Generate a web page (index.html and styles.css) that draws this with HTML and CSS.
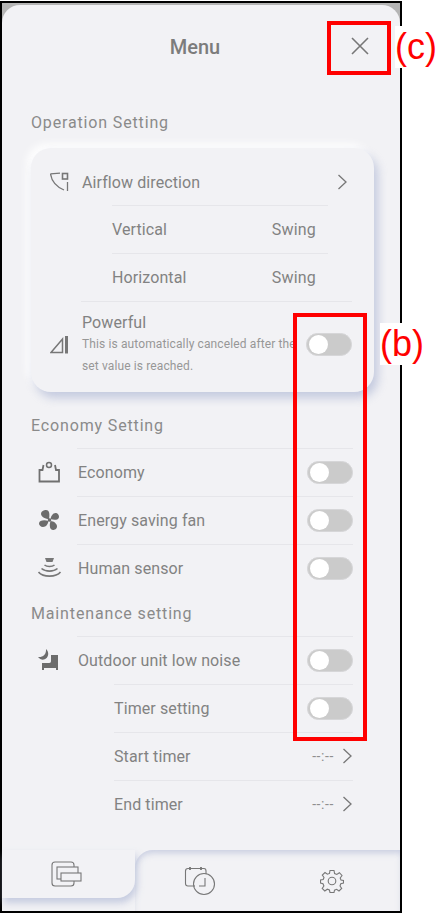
FILE: index.html
```html
<!DOCTYPE html>
<html lang="en">
<head>
    <meta charset="UTF-8">
    <meta name="viewport" content="width=device-width, initial-scale=1.0">
    <title>Menu</title>
    <link rel="stylesheet" href="styles.css">
</head>
<body>
    <div class="frame">
        <div class="panel">
            <div class="header">
                <div class="header-title">Menu</div>
                <svg class="close" width="20" height="20" viewBox="0 0 20 20"><path d="M2 2L18 18M18 2L2 18" fill="none" stroke="#777" stroke-width="1.6"/></svg>
            </div>

            <div class="section-title first">Operation Setting</div>
            <div class="card">
                <div class="row line-sub">
                    <svg class="icon-card" width="20" height="20" viewBox="0 0 20 20" fill="none" stroke="#777" stroke-width="1.3"><path d="M.5 1.800L10 1.200M.5 1.800C1.500 9 7 15 14 18"/><rect x="12.500" y="1.500" width="5" height="5.500" stroke-width="1.600"/><path d="M17.500 10V19"/></svg>
                    <span class="label">Airflow direction</span>
                    <svg class="chevron airflow-chevron" width="11" height="16" viewBox="0 0 11 16"><path d="M1.500 1L9 8L1.500 15" fill="none" stroke="#777" stroke-width="1.3"/></svg>
                </div>
                <div class="row sub line-sub">
                    <span class="label">Vertical</span>
                    <span class="value">Swing</span>
                </div>
                <div class="row sub line-wide">
                    <span class="label">Horizontal</span>
                    <span class="value">Swing</span>
                </div>
                <div class="row-powerful">
                    <svg class="icon-card" width="20" height="18" viewBox="0 0 20 18"><path d="M1 16.500L12.500 3V16.500Z" fill="none" stroke="#777" stroke-width="1.5"/><rect x="15" y="0" width="3" height="17.500" fill="#777"/></svg>
                    <div class="powerful-text">
                        <div class="label powerful-name">Powerful</div>
                        <div class="note">This is automatically canceled after the set value is reached.</div>
                    </div>
                    <div class="toggle toggle-powerful"></div>
                </div>
            </div>

            <div class="section-title">Economy Setting</div>
            <div class="list">
                <div class="item line-top">
                    <svg class="icon" width="24" height="22" viewBox="0 0 24 22" fill="none" stroke="#707070" stroke-width="1.800"><path d="M5.500 4L4.500 9H1.500V20.500H21V9H18L17 4"/><circle cx="11" cy="4" r="2.500" stroke-width="1.500"/></svg>
                    <span class="label">Economy</span>
                    <div class="toggle"></div>
                </div>
                <div class="item line-top">
                    <svg class="icon" width="24" height="22" viewBox="0 0 24 22" fill="#6c6c6c"><circle cx="11.500" cy="11" r="1.800"/><path d="M11 10C8 10 3 8 3 5C3 2 6 1 8 1C11 1 12 4 11 10Z"/><path d="M12.500 10C13 7 15 4 17.500 4C20 4 21 6.500 21 8C21 11 16 11.500 12.500 10Z"/><path d="M12.500 12C16 12 19 15 19 17.500C19 20 16.500 21 15 21C12 21 11 17 12.500 12Z"/><path d="M10.500 12C10 15 8 18 5 18C2.500 18 1 16 1 14.500C1 11.500 6 10.500 10.500 12Z"/></svg>
                    <span class="label">Energy saving fan</span>
                    <div class="toggle"></div>
                </div>
                <div class="item line-top">
                    <svg class="icon" width="24" height="22" viewBox="0 0 24 22" fill="none" stroke="#777" stroke-width="1.600"><path d="M7 1H16L14.500 5H8.500Z" fill="#777" stroke="none"/><path d="M6.500 8C9 10 14 10 16.500 8M3.500 11.500C7.500 15 15.500 15 19.500 11.500M.5 15C5 20.500 18 20.500 22.500 15"/></svg>
                    <span class="label">Human sensor</span>
                    <div class="toggle"></div>
                </div>
            </div>

            <div class="section-title section-full">Maintenance setting</div>
            <div class="list">
                <div class="item line-top">
                    <svg class="icon" width="24" height="22" viewBox="0 0 24 22" fill="#6c6c6c"><path d="M8 0C11.500 3 11 9 6 10.500C4 11 1.500 10 0 8C4.500 8.500 8.500 6 8 0Z"/><path d="M13 6H20V21H18V19H6V21H4V14H11C13 14 13 13 13 11Z"/></svg>
                    <span class="label">Outdoor unit low noise</span>
                    <div class="toggle"></div>
                </div>
                <div class="item sub line-top">
                    <span class="label">Timer setting</span>
                    <div class="toggle"></div>
                </div>
                <div class="item sub line-top">
                    <span class="label">Start timer</span>
                    <span class="time">--:--</span>
                    <svg class="chevron" width="11" height="16" viewBox="0 0 11 16"><path d="M1.500 1L9 8L1.500 15" fill="none" stroke="#777" stroke-width="1.3"/></svg>
                </div>
                <div class="item sub line-top">
                    <span class="label">End timer</span>
                    <span class="time">--:--</span>
                    <svg class="chevron" width="11" height="16" viewBox="0 0 11 16"><path d="M1.500 1L9 8L1.500 15" fill="none" stroke="#777" stroke-width="1.3"/></svg>
                </div>
            </div>

            <div class="nav">
                <div class="tab tab-active">
                    <svg width="32" height="26" viewBox="0 0 32 26" fill="none" stroke="#777" stroke-width="1.100"><rect x="1" y="1" width="22" height="24" rx="3"/><rect x="6" y="6" width="21" height="12" fill="#f2f2f5"/><rect x="10" y="12" width="20" height="8" fill="#f2f2f5"/></svg>
                </div>
                <div class="tab-rest">
                    <div class="tab tab-clock">
                        <svg width="32" height="30" viewBox="0 0 32 30" fill="none" stroke="#777" stroke-width="1.100"><path d="M11 20H4C2.500 20 1.500 19 1.500 17.500V5C1.500 3.500 2.500 2.500 4 2.500H20C21.500 2.500 22 3.500 22 5V8"/><path d="M6 1V4M17 1V4" stroke-width="1.800"/><circle cx="20" cy="18" r="10.500"/><path d="M21 12V20H15"/></svg>
                    </div>
                    <div class="tab tab-gear">
                        <svg width="24" height="24" viewBox="0 0 24 24" fill="none" stroke="#777" stroke-width="1.100"><circle cx="12" cy="12" r="3.800"/><path d="M10 1.500H14L14.600 4.500L16.800 5.400L19.400 3.700L22 6.500L20.200 9L21 11L23.500 11.500V14L20.800 14.800L20 17L21.700 19.500L19 22L16.600 20.300L14.500 21.200L14 23.500H10L9.400 21L7.300 20.200L4.800 22L2.200 19.500L3.900 17L3 14.800L.5 14V11L3.200 10.500L4 8.500L2.300 6.100L5 3.500L7.400 5.200L9.500 4.400Z"/></svg>
                    </div>
                </div>
            </div>
        </div>
    </div>

    <div class="mark mark-c"></div>
    <div class="mark-label label-c">(c)</div>
    <div class="mark mark-b"></div>
    <div class="mark-label label-b">(b)</div>
</body>
</html>
```

FILE: styles.css
```css
* {
    box-sizing: border-box;
}

body {
    margin: 0;
    background-color: #fff;
    font-family: 'Roboto', 'Liberation Sans', sans-serif;
    color: #828282;
}

.frame {
    width: 402px;
    height: 912px;
    margin-top: 1px;
    border: 2px solid #000;
    background-color: #b5b5b5;
    padding-top: 2px;
}

.panel {
    height: 906px;
    background-color: #f2f2f5;
    border-radius: 18px 18px 0 0;
}

.header {
    height: 83px;
    padding-right: 12px;
    display: flex;
    align-items: center;
    justify-content: center;
    position: relative;
}

.header-title {
    font-size: 20px;
    font-weight: 500;
    color: #7c7c7c;
}

.close {
    position: absolute;
    right: 30px;
    top: 31px;
}

.section-title {
    height: 24px;
    margin: 0 0 10px 29px;
    font-size: 16px;
    line-height: 24px;
    letter-spacing: 0.85px;
    color: #8a8a8a;
}

.section-title.first {
    margin-top: 23px;
    margin-bottom: 13px;
}

.section-full {
    margin-top: 10px;
}

.card {
    width: 343px;
    height: 244px;
    margin: 0 0 22px 29px;
    padding: 10px 22px 0 19px;
    border-radius: 20px;
    background-color: #f2f2f5;
    box-shadow: 4px 6px 10px rgba(180, 188, 215, 0.75), -4px -4px 8px #fff;
}

.row {
    height: 48px;
    display: flex;
    align-items: center;
    position: relative;
    font-size: 16px;
}

.row.sub {
    padding-left: 62px;
    padding-right: 36px;
    padding-bottom: 2px;
    justify-content: space-between;
}

.line-sub::after {
    content: "";
    position: absolute;
    left: 62px;
    right: 24px;
    bottom: 0;
    height: 1px;
    background-color: #e6e6ea;
}

.line-wide::after {
    content: "";
    position: absolute;
    left: 31px;
    right: 0;
    bottom: 0;
    height: 1px;
    background-color: #e6e6ea;
}

.icon-card {
    width: 20px;
    margin-right: 12px;
    flex-shrink: 0;
}

.label {
    font-size: 16px;
    letter-spacing: 0.1px;
    color: #828282;
}

.value {
    font-size: 16px;
    letter-spacing: 0.2px;
}

.airflow-chevron {
    margin-left: auto;
    margin-right: 2px;
    position: relative;
    left: -2px;
}

.row-powerful {
    display: flex;
    align-items: center;
    height: 80px;
    padding-top: 6px;
}

.powerful-text {
    width: 224px;
    flex-shrink: 0;
}

.powerful-name {
    margin-bottom: 1px;
}

.note {
    font-size: 12px;
    line-height: 22px;
    color: #979797;
    letter-spacing: 0.12px;
    width: 224px;
}

.list {
    width: 322px;
    margin-left: 29px;
}

.item {
    height: 48px;
    display: flex;
    align-items: center;
    position: relative;
    padding-left: 47px;
}

.item.sub {
    padding-left: 83px;
}

.line-top::before {
    content: "";
    position: absolute;
    top: 0;
    left: 46px;
    right: 0;
    height: 1px;
    background-color: #e6e6ea;
}

.item.sub.line-top::before {
    left: 83px;
}

.icon {
    position: absolute;
    left: 7px;
    top: 13px;
}

.toggle {
    width: 46px;
    height: 23px;
    margin-left: auto;
    border-radius: 12px;
    border: 1px solid #d6d6d8;
    background-color: #cbcbcb;
    position: relative;
    flex-shrink: 0;
}

.toggle::after {
    content: "";
    position: absolute;
    left: 2px;
    top: 1px;
    width: 19px;
    height: 19px;
    border-radius: 50%;
    background-color: #fff;
}

.toggle-powerful {
    margin-bottom: 2px;
}

.time {
    margin-left: auto;
    margin-right: 8px;
    font-size: 14px;
    letter-spacing: 0.6px;
    color: #8f8f8f;
}

.chevron {
    flex-shrink: 0;
}

.nav {
    display: flex;
    height: 61px;
    margin-top: 22px;
}

.tab {
    display: flex;
    align-items: center;
    justify-content: center;
}

.tab-active {
    width: 133px;
    height: 48px;
    padding: 0 4px 0 0;
    border-radius: 0 0 18px 0;
    background-color: #f2f2f5;
    box-shadow: 2px 5px 7px rgba(180, 188, 215, 0.7);
    position: relative;
    z-index: 1;
}

.tab-rest {
    flex: 1;
    display: flex;
    border-radius: 18px 0 0 0;
    background-color: #f2f2f5;
    box-shadow: inset 0 5px 6px -2px rgba(180, 188, 215, 0.65);
}

.tab-clock {
    width: 130px;
}

.tab-gear {
    width: 133px;
}

/* red annotation marks drawn over the shot */
.mark {
    position: absolute;
    border: 4px solid #ff0000;
}

.mark-c {
    left: 327px;
    top: 21px;
    width: 64px;
    height: 54px;
}

.mark-b {
    left: 293px;
    top: 313px;
    width: 74px;
    height: 428px;
}

.mark-label {
    position: absolute;
    font-family: 'Liberation Sans', sans-serif;
    font-size: 36px;
    line-height: 42px;
    color: #ff0000;
    background-color: #fff;
}

.label-c {
    left: 395px;
    top: 26px;
}

.label-b {
    left: 380px;
    top: 323px;
}
```
